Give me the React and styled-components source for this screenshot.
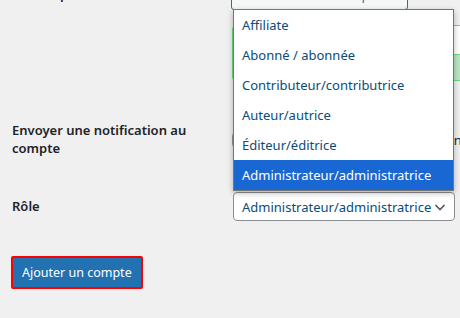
import React from 'react';
import styled, { createGlobalStyle } from 'styled-components';

const GlobalStyle = createGlobalStyle`
  html, body {
    margin: 0;
    padding: 0;
    width: 460px;
    height: 318px;
    overflow: hidden;
    background: #f0f0f1;
    font-family: "Segoe UI", "Noto Sans", sans-serif;
    font-size: 13px;
    color: #1d2327;
  }
`;

const roles = [
  'Affiliate',
  'Abonné / abonnée',
  'Contributeur/contributrice',
  'Auteur/autrice',
  'Éditeur/éditrice',
  'Administrateur/administratrice',
];

const App = () => (
  <>
    <GlobalStyle />
    <Page>
      <Row>
        <Label>Mot de passe</Label>
        <Field>
          <SecondaryButton>Générer un mot de passe</SecondaryButton>
          <PasswordWrap>
            <PasswordInput defaultValue="Xk7#pQ2!vL9m$Rt4" />
            <Strength>Forte</Strength>
          </PasswordWrap>
        </Field>
      </Row>
      <Row>
        <Label>Envoyer une notification au compte</Label>
        <Field>
          <CheckLabel>
            <Checkbox />
            Envoyer à la nouvelle personne un e-mail à propos de son compte.
          </CheckLabel>
        </Field>
      </Row>
      <Row>
        <Label>Rôle</Label>
        <Field>
          <SelectWrap>
            <DropList>
              {roles.map(role => (
                <Option key={role} selected={role === 'Administrateur/administratrice'}>
                  {role}
                </Option>
              ))}
            </DropList>
            <Select>
              Administrateur/administratrice
              <svg width="16" height="16" viewBox="0 0 16 16">
                <polyline points="3.5,6 8,10.5 12.5,6" fill="none" stroke="#50575e" strokeWidth="1.6" />
              </svg>
            </Select>
          </SelectWrap>
        </Field>
      </Row>
      <Submit>
        <PrimaryButton>Ajouter un compte</PrimaryButton>
      </Submit>
    </Page>
  </>
);

const Page = styled.div`
  margin-top: -35px;
  padding-left: 12px;
`;

const Row = styled.div`
  display: grid;
  grid-template-columns: 220px 1fr;
`;

const Label = styled.div`
  padding: 20px 10px 20px 0;
  font-weight: 600;
  line-height: 18px;
`;

const Field = styled.div`
  padding: 15px 0;
  min-width: 0;
`;

const SecondaryButton = styled.button`
  height: 30px;
  padding: 0 10px;
  font-family: inherit;
  font-size: 13px;
  color: #2271b1;
  background: #f6f7f7;
  border: 1px solid #2271b1;
  border-radius: 3px;
  margin-left: -1px;
`;

const PasswordWrap = styled.div`
  margin-top: 15px;
  margin-bottom: 5px;
  width: 260px;
`;

const PasswordInput = styled.input`
  display: block;
  box-sizing: border-box;
  width: 100%;
  height: 30px;
  padding: 0 8px;
  font-family: "Liberation Mono", monospace;
  font-size: 14px;
  background: #fff;
  border: 1px solid #68de7c;
  border-radius: 4px 4px 0 0;
`;

const Strength = styled.div`
  box-sizing: border-box;
  height: 27px;
  margin-top: -1px;
  padding: 3px 8px;
  background: #b8e6bf;
  border: 1px solid #68de7c;
  border-radius: 0 0 4px 4px;
  font-size: 13px;
`;

const CheckLabel = styled.label`
  display: flex;
  align-items: center;
  gap: 4px;
  margin-top: 15px;
  white-space: nowrap;
`;

const Checkbox = styled.span`
  flex: none;
  width: 16px;
  height: 16px;
  box-sizing: border-box;
  background: #fff;
  border: 1px solid #8c8f94;
  border-radius: 4px;
`;

const SelectWrap = styled.div`
  position: relative;
  width: 222px;
  margin-left: 1px;
`;

const Select = styled.div`
  box-sizing: border-box;
  height: 29px;
  display: flex;
  align-items: center;
  justify-content: space-between;
  padding: 0 6px 0 8px;
  color: #0a4b78;
  background: #fff;
  border: 1px solid #8c8f94;
  border-radius: 4px;
  white-space: nowrap;
`;

const DropList = styled.div`
  position: absolute;
  left: 0;
  bottom: calc(100% + 1px);
  width: 221px;
  box-sizing: border-box;
  background: #fff;
  border: 1px solid #767676;
  box-shadow: 0 2px 6px rgba(0, 0, 0, 0.28);
  z-index: 2;
`;

const Option = styled.div`
  height: 30px;
  display: flex;
  align-items: center;
  padding-left: 8px;
  white-space: nowrap;
  color: ${props => props.selected ? '#fff' : '#0a4b78'};
  background: ${props => props.selected ? '#1967d2' : 'transparent'};
`;

const Submit = styled.div`
  padding-top: 20px;
`;

const PrimaryButton = styled.button`
  height: 33px;
  padding: 0 9px;
  margin-left: -1px;
  font-family: inherit;
  font-size: 12.5px;
  color: #fff;
  background: #2271b1;
  border: 2px solid #ff0000;
  border-radius: 2px;
  box-shadow: inset 0 0 0 1px #2271b1;
`;

export default App;
